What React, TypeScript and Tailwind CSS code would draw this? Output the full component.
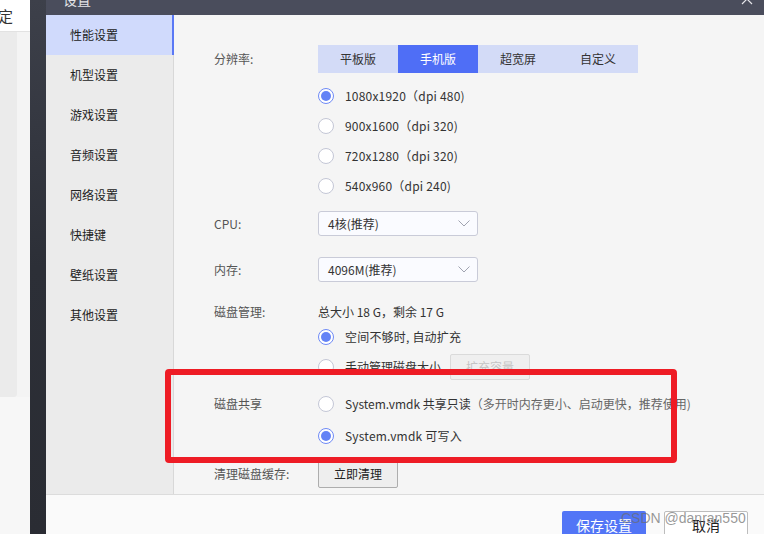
import React from 'react';

const font = "font-['Noto_Sans_CJK_SC','Noto_Sans',sans-serif]";

const menu = ['性能设置', '机型设置', '游戏设置', '音频设置', '网络设置', '快捷键', '壁纸设置', '其他设置'];

const Radio: React.FC<{ checked?: boolean }> = ({ checked }) =>
  checked ? (
    <span className="w-[16px] h-[16px] rounded-full border border-[#6f8af6] bg-white flex items-center justify-center shrink-0">
      <span className="w-[10px] h-[10px] rounded-full bg-[#6483f6]" />
    </span>
  ) : (
    <span className="w-[16px] h-[16px] rounded-full border border-[#c4c7d6] bg-white shrink-0" />
  );

const Chevron = () => (
  <svg width="12" height="7" viewBox="0 0 12 7" className="shrink-0">
    <path d="M0.5 0.5 L6 6 L11.5 0.5" fill="none" stroke="#a0a3b0" strokeWidth="1" />
  </svg>
);

const Select: React.FC<{ value: string }> = ({ value }) => (
  <div className="w-[160px] h-[25px] bg-[#fafbff] border border-[#c9cbd8] rounded-[3px] flex items-center justify-between pl-[9px] pr-[7px] text-[12px] text-[#333]">
    <span>{value}</span>
    <Chevron />
  </div>
);

const Label: React.FC<{ children: React.ReactNode }> = ({ children }) => (
  <div className="w-[104px] shrink-0 text-[12px] text-[#555]">{children}</div>
);

const RadioRow: React.FC<{ checked?: boolean; children: React.ReactNode; h?: string }> = ({ checked, children, h = 'h-[30px]' }) => (
  <div className={`${h} flex items-center pl-[104px]`}>
    <Radio checked={checked} />
    <span className="ml-[11px] text-[12px] text-[#333] whitespace-nowrap tracking-[0.2px]">{children}</span>
  </div>
);

export default function App() {
  const seg = ['平板版', '手机版', '超宽屏', '自定义'];
  return (
    <div className={`relative w-[764px] h-[534px] overflow-hidden flex ${font}`}>
      {/* background app */}
      <div className="w-[30px] flex flex-col bg-[#f7f7f7]">
        <div className="h-[32px] bg-white border-b border-[#e2e2e2] flex items-center overflow-hidden">
          <span className="-ml-[2px] text-[15px] text-[#333] leading-none">定</span>
        </div>
        <div className="h-[365px] flex">
          <div className="w-[17px] bg-[#ebebeb] rounded-br-[3px]" />
          <div className="flex-1 bg-[#f4f4f4]" />
        </div>
        <div className="flex-1" />
      </div>
      <div className="w-[16px] bg-gradient-to-b from-[#3d404a] via-[#2c2f37] to-[#2a2c33]" />

      {/* dialog */}
      <div className="flex-1 flex flex-col">
        <div className="h-[15px] bg-[#4a4d5c] flex justify-between overflow-hidden shrink-0">
          <span className="ml-[17px] -mt-[11px] text-[14px] leading-[20px] text-[#e4e4e8]">设置</span>
          <svg width="12" height="12" viewBox="0 0 12 12" className="-mt-[7px] mr-[11px]">
            <path d="M1 1 L11 11 M11 1 L1 11" stroke="#e6e6ea" strokeWidth="1.2" />
          </svg>
        </div>

        <div className="flex-1 flex">
          <div className="w-[128px] bg-[#ebebeb] border-r border-[#d8d8d8] flex flex-col">
            {menu.map((m, i) => (
              <div
                key={m}
                className={
                  i === 0
                    ? 'h-[40px] flex items-center pl-[24px] text-[12px] text-[#222] bg-[#d0dafc] border-r-[2px] border-[#5a78f5] -mr-[1px]'
                    : 'h-[40px] flex items-center pl-[24px] text-[12px] text-[#222]'
                }
              >
                {m}
              </div>
            ))}
          </div>

          <div className="flex-1 bg-[#f5f5f5] pl-[40px] pt-[30px] flex flex-col">
            <div className="h-[28px] flex items-center">
              <Label>分辨率:</Label>
              <div className="flex bg-[#d3dbf7]">
                {seg.map((s, i) => (
                  <div
                    key={s}
                    className={
                      i === 1
                        ? 'w-[80px] h-[28px] flex items-center justify-center text-[12px] bg-[#4f6ef6] text-white'
                        : 'w-[80px] h-[28px] flex items-center justify-center text-[12px] text-[#333]'
                    }
                  >
                    {s}
                  </div>
                ))}
              </div>
            </div>
            <div className="mt-[8px]">
              <RadioRow checked>1080x1920（dpi 480)</RadioRow>
              <RadioRow>900x1600（dpi 320)</RadioRow>
              <RadioRow>720x1280（dpi 320)</RadioRow>
              <RadioRow>540x960（dpi 240)</RadioRow>
            </div>

            <div className="mt-[10px] h-[25px] flex items-center">
              <Label>CPU:</Label>
              <Select value="4核(推荐)" />
            </div>
            <div className="mt-[21px] h-[25px] flex items-center">
              <Label>内存:</Label>
              <Select value="4096M(推荐)" />
            </div>

            <div className="mt-[20px] h-[20px] flex items-center">
              <Label>磁盘管理:</Label>
              <span className="text-[12px] text-[#333]">总大小 18 G，剩余 17 G</span>
            </div>
            <RadioRow checked>空间不够时, 自动扩充</RadioRow>
            <div className="h-[30px] flex items-center pl-[104px]">
              <Radio />
              <span className="ml-[11px] text-[12px] text-[#333]">手动管理磁盘大小</span>
              <div className="ml-[9px] w-[80px] h-[26px] bg-[#efefef] border border-[#dadada] rounded-[2px] flex items-center justify-center text-[12px] text-[#c4c4c4]">
                扩充容量
              </div>
            </div>

            <div className="mt-[6px] h-[32px] flex items-center">
              <Label>磁盘共享</Label>
              <Radio />
              <span className="ml-[11px] text-[12px] text-[#333] whitespace-nowrap">
                System.vmdk 共享只读<span className="text-[#666]">（多开时内存更小、启动更快，推荐使用)</span>
              </span>
            </div>
            <RadioRow checked h="h-[32px]">System.vmdk 可写入</RadioRow>

            <div className="mt-[8px] h-[28px] flex items-center">
              <Label>清理磁盘缓存:</Label>
              <div className="w-[80px] h-[28px] bg-[#eeeeee] border border-[#adadad] rounded-[2px] flex items-center justify-center text-[12px] text-[#222]">
                立即清理
              </div>
            </div>
          </div>
        </div>

        <div className="h-[40px] shrink-0 bg-[#fafafa] border-t border-[#dcdcdc] flex justify-end items-start pt-[16px] pr-[16px] gap-[18px] overflow-hidden">
          <div className="w-[84px] h-[28px] bg-[#5275f6] rounded-[2px] flex items-center justify-center text-[14px] text-white">
            保存设置
          </div>
          <div className="w-[84px] h-[28px] bg-white border border-[#bdbdbd] rounded-[2px] flex items-center justify-center text-[14px] text-[#222]">
            取消
          </div>
        </div>
      </div>

      {/* annotation and watermark */}
      <div className="absolute left-[165px] top-[369px] w-[512px] h-[94px] border-[6px] border-[#ee1c25] rounded-[4px]" />
      <div className="absolute left-[621px] top-[509px] text-[14px] leading-[18px] text-[#6b6b6b]/70 font-['Liberation_Sans',sans-serif] whitespace-nowrap">
        CSDN @danran550
      </div>
    </div>
  );
}
